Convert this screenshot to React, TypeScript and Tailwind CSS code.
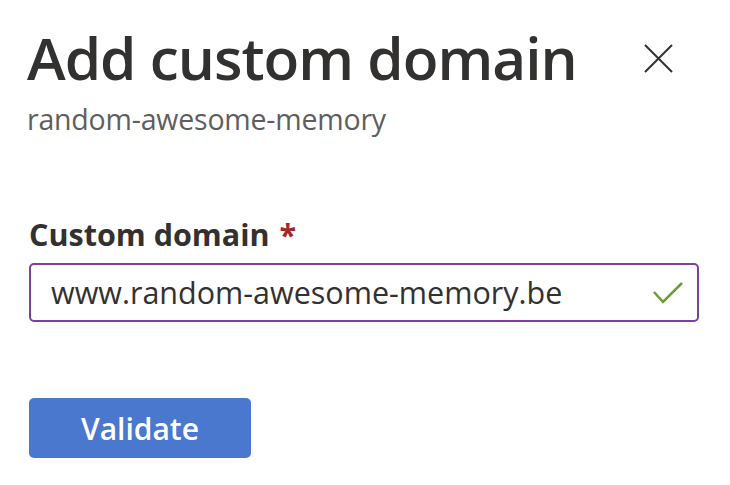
import React from "react";

export default function App() {
  return (
    <div
      className="w-[730px] h-[485px] bg-white overflow-hidden text-[#323130]"
      style={{ fontFamily: '"Open Sans", "Noto Sans", sans-serif' }}
    >
      <div className="flex items-start justify-between pl-[27px] pr-[57px] pt-[21px]">
        <div className="flex flex-col">
          <h1 className="text-[58.5px] leading-[72px] font-semibold tracking-[-1px] text-[#323130]">
            Add custom domain
          </h1>
          <div className="text-[28.5px] leading-[36px] text-[#605e5c] mt-[8px] tracking-[-0.2px]">
            random-awesome-memory
          </div>
        </div>
        <button className="mt-[23px] w-[29px] h-[29px] flex items-center justify-center">
          <svg width="29" height="29" viewBox="0 0 29 29" fill="none">
            <path d="M1 1 L28 28 M28 1 L1 28" stroke="#323130" strokeWidth="2" />
          </svg>
        </button>
      </div>

      <div className="px-[29px] mt-[77px]">
        <label className="flex items-center gap-[10px] text-[30.5px] leading-[40px] font-bold text-[#323130]">
          Custom domain
          <span className="text-[#a4262c] font-bold">*</span>
        </label>
        <div className="mt-[9px] w-[670px] h-[59px] border-2 border-[#7f3f9f] rounded-[5px] flex items-center justify-between pl-[20px] pr-[14px]">
          <span className="text-[30.5px] text-[#323130]">www.random-awesome-memory.be</span>
          <svg width="30" height="22" viewBox="0 0 30 22" fill="none">
            <path d="M1 10 L10 20 L29 1" stroke="#6b9e2f" strokeWidth="2.5" />
          </svg>
        </div>
        <button className="mt-[76px] w-[222px] h-[60px] rounded-[5px] bg-[#4a78cf] text-white text-[30px] font-semibold flex items-center justify-center">
          Validate
        </button>
      </div>
    </div>
  );
}
